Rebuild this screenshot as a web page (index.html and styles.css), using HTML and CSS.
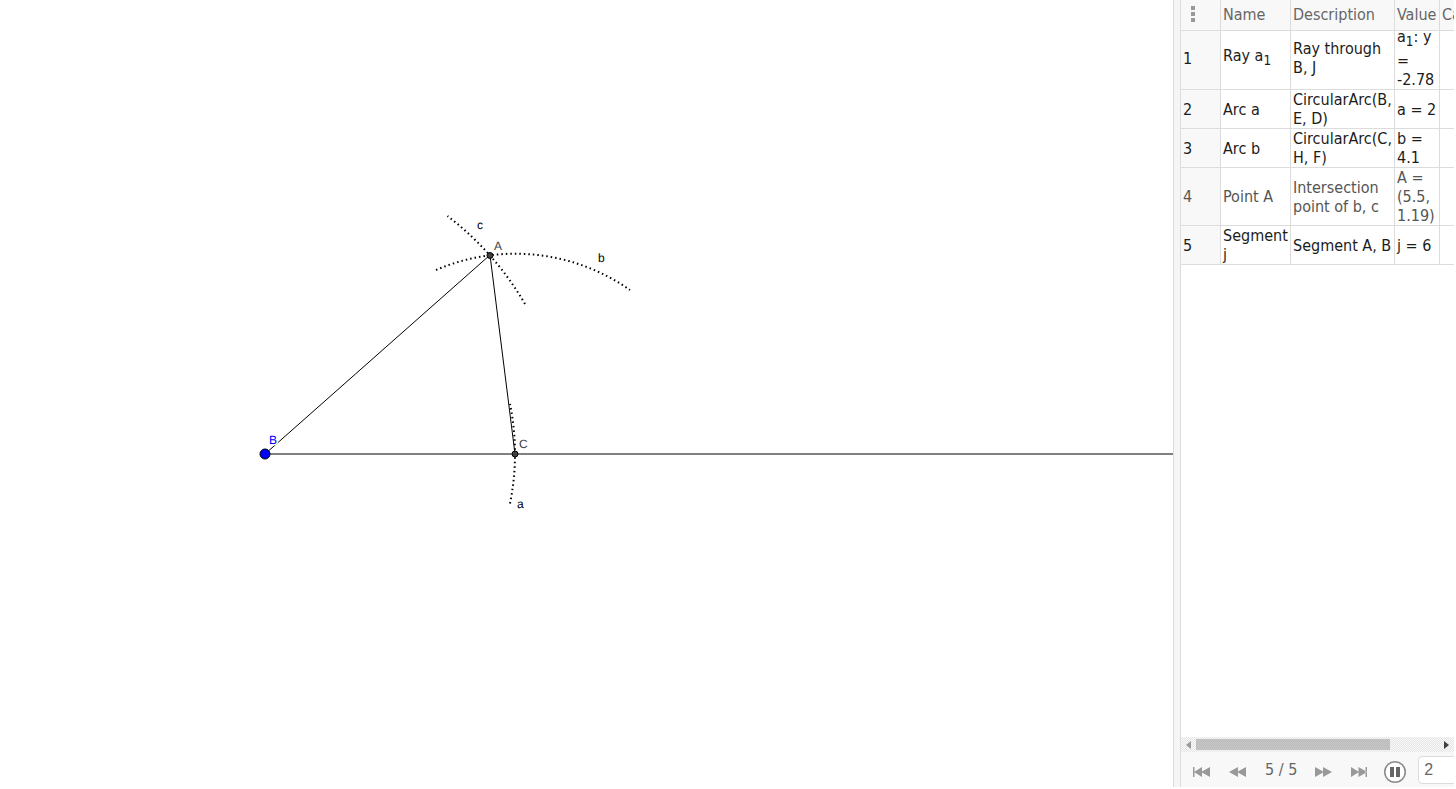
FILE: index.html
```
<!DOCTYPE html>
<html lang="en">
<head>
  <meta charset="UTF-8" />
  <title>Construction Protocol</title>
  <link rel="stylesheet" href="styles.css">
</head>
<body>
  <main class="app">
    <svg class="graphics" role="img" aria-label="Triangle construction">
      <g class="arcs">
        <path d="M510 503.500 A250 250 0 0 0 510 404" />
        <path d="M436 270 A200 200 0 0 1 630 290" />
        <path d="M525 304 A300 300 0 0 0 447.500 216" />
      </g>
      <line class="ray" x1="265" y1="454" x2="100%" y2="454" />
      <line class="segment" x1="265" y1="454" x2="490" y2="255" />
      <line class="segment" x1="490" y1="255" x2="515" y2="454" />
      <text class="label-free" x="269" y="444">B</text>
      <text class="label-dep" x="494" y="250">A</text>
      <text class="label-dep" x="519" y="448">C</text>
      <text x="517" y="508">a</text>
      <text x="598" y="262">b</text>
      <text x="477" y="229">c</text>
      <circle class="point-free" cx="265" cy="454" r="5" />
      <circle class="point" cx="490" cy="255.500" r="3" />
      <circle class="point" cx="515" cy="454" r="3" />
    </svg>

    <div class="splitter"></div>

    <section class="protocol">
      <div class="table-wrap">
        <table>
          <colgroup>
            <col class="col-no"><col class="col-name"><col class="col-desc"><col class="col-value"><col class="col-caption">
          </colgroup>
          <thead>
            <tr>
              <th><button class="menu" aria-label="Columns"><svg width="4" height="16"><path d="M0 0h4v4H0zM0 6h4v4H0zM0 12h4v4H0z" /></svg></button></th>
              <th>Name</th>
              <th>Description</th>
              <th>Value</th>
              <th>Caption</th>
            </tr>
          </thead>
          <tbody>
            <tr class="tall"><td>1</td><td>Ray a<sub>1</sub></td><td>Ray through B, J</td><td><div class="value">a<sub>1</sub>: y = -2.78</div></td><td></td></tr>
            <tr><td>2</td><td>Arc a</td><td>CircularArc(B, E, D)</td><td>a = 2</td><td></td></tr>
            <tr><td>3</td><td>Arc b</td><td>CircularArc(C, H, F)</td><td>b = 4.1</td><td></td></tr>
            <tr class="dependent"><td>4</td><td>Point A</td><td>Intersection point of b, c</td><td>A = (5.5, 1.19)</td><td></td></tr>
            <tr><td>5</td><td>Segment j</td><td>Segment A, B</td><td>j = 6</td><td></td></tr>
          </tbody>
        </table>
      </div>

      <div class="scrollbar">
        <button class="arrow" aria-label="Scroll left" disabled><svg width="5" height="8"><path d="M5 0v8L0 4z" /></svg></button>
        <div class="track"><div class="thumb"></div></div>
        <button class="arrow" aria-label="Scroll right"><svg width="5" height="8"><path d="M0 0v8l5-4z" /></svg></button>
      </div>

      <div class="navbar">
        <button class="nav" aria-label="First step"><svg width="18" height="12"><path d="M0 1h1.500v10H0zM9 1v10L1 6zM17 1v10L8 6z" /></svg></button>
        <button class="nav" aria-label="Previous step"><svg width="18" height="12"><path d="M9 1v10L0 6zM17 1v10L8 6z" /></svg></button>
        <span class="steps">5 / 5</span>
        <button class="nav" aria-label="Next step"><svg width="18" height="12"><path d="M1 1v10l9-5zM9 1v10l9-5z" /></svg></button>
        <button class="nav" aria-label="Last step"><svg width="18" height="12"><path d="M1 1v10l8-5zM8.500 1v10L17 6zM15.500 1H17v10h-1.500z" /></svg></button>
        <button class="play" aria-label="Pause"><svg width="22" height="22"><circle cx="11" cy="11" r="10.250" /><path d="M6 6h4v10H6zM12 6h4v10h-4z" /></svg></button>
        <input class="speed" type="text" value="2" aria-label="Seconds per step">
      </div>
    </section>
  </main>
</body>
</html>
```

FILE: styles.css
```
* { box-sizing: border-box; }
body { margin: 0; background: #fff; color: #1c1c1c; font: 16px/19px "DejaVu Sans Condensed", "DejaVu Sans", sans-serif; font-stretch: condensed; }
button { padding: 0; border: none; background: none; cursor: pointer; }
svg { display: block; }

.app { display: grid; grid-template-columns: 1fr 8px 273px; height: 100vh; padding: 0 2px 2px 0; overflow: hidden; }

.graphics { width: 100%; height: 100%; font: 12px "Liberation Sans", Arial, sans-serif; text-rendering: geometricPrecision; }
.arcs { fill: none; stroke: #000; stroke-width: 2; stroke-dasharray: 1.5 3; }
.ray { stroke: #808080; stroke-width: 2; }
.segment { stroke: #000; stroke-width: 1; }
.point-free { fill: #00f; stroke: #000; }
.point { fill: #404040; stroke: #000; }
.label-free { fill: #00f; stroke: #fff; stroke-width: 3; paint-order: stroke; }
.label-dep { fill: #404040; }

.splitter { background: #f5f5f5; border: 1px solid #dcdcdc; border-width: 0 1px; cursor: col-resize; }

.protocol { display: flex; flex-direction: column; min-width: 0; overflow: hidden; }
.table-wrap { flex: 1; min-height: 0; overflow: hidden; }
table { table-layout: fixed; width: 360px; border-collapse: separate; border-spacing: 0; }
.col-no { width: 40px; }
.col-name { width: 70px; }
.col-desc { width: 104px; }
.col-value { width: 45px; }
th, td { padding: 0 2px; border: 1px solid #dcdcdc; border-width: 0 1px 1px 0; text-align: left; vertical-align: middle; }
th { height: 31px; padding-bottom: 2px; background: #f8f8f8; color: #666; font-weight: normal; }
td:first-child { background: #f8f8f8; }
.tall td { padding-bottom: 4px; }
.tall td:nth-child(4) { padding-bottom: 0; }
.value { margin-top: -4px; }
.dependent { color: #555; }
sub { font-size: smaller; }
.menu { display: block; margin-left: 8px; }
.menu svg { fill: #999; }

.scrollbar { display: flex; align-items: center; height: 15px; background: repeating-conic-gradient(#e4e4e4 0 25%, #fafafa 0 50%) 0 0 / 2px 2px; }
.arrow { display: grid; place-items: center; width: 15px; height: 15px; }
.arrow svg { fill: #404040; }
.arrow:disabled svg { fill: #999; }
.track { flex: 1; }
.thumb { width: 80%; height: 11px; background: #c1c1c1; }

.navbar { display: flex; align-items: center; height: 35px; padding: 4px 0 0 12px; background: #f8f8f8; color: #666; overflow: hidden; }
.nav { flex: none; width: 18px; margin-right: 18px; }
.nav svg { fill: #999; }
.steps { flex: none; margin-right: 17px; padding-bottom: 4px; }
.play { flex: none; margin-right: 12px; margin-left: -2px; }
.play svg { fill: #666; }
.play circle { fill: #fff; stroke: #888; stroke-width: 1.5; }
.speed { flex: none; width: 60px; height: 28px; margin-bottom: 4px; padding: 0 5px; border: 1px solid #dcdcdc; border-radius: 4px; background: #fff; color: #666; font: 16px "Liberation Sans", Arial, sans-serif; }
```
